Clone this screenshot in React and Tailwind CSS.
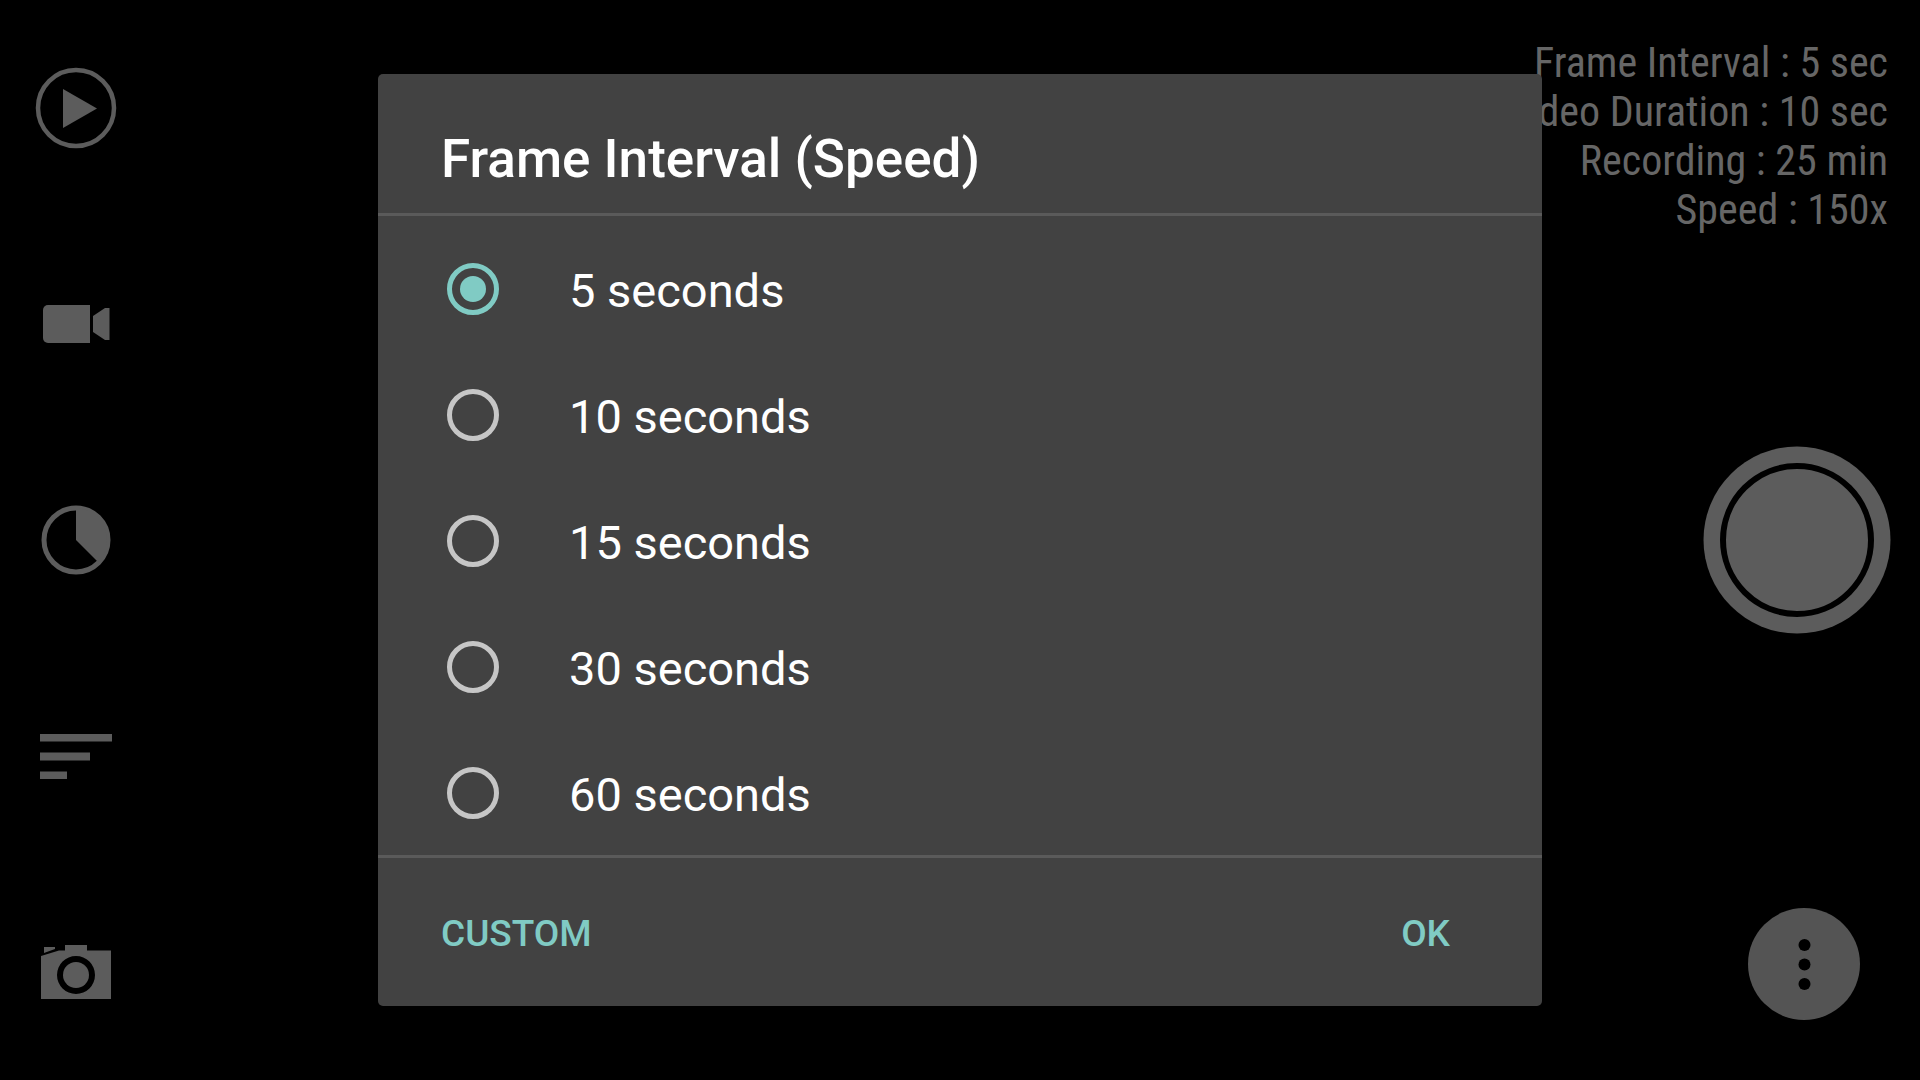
import { useState } from "react";

const intervals = [5, 10, 15, 30, 60];

const stats = [
  "Frame Interval : 5 sec",
  "Video Duration : 10 sec",
  "Recording : 25 min",
  "Speed : 150x",
];

const tools = [
  {
    label: "Play",
    icon: (
      <>
        <circle cx="40" cy="40" r="38" fill="none" stroke="currentColor" strokeWidth="4.5" />
        <path d="M27 21v39l34-19.500z" />
      </>
    ),
  },
  {
    label: "Video",
    icon: (
      <>
        <path d="M12 21h42v38H12a5 5 0 0 1-5-5V26a5 5 0 0 1 5-5z" />
        <path d="M57 32l12-8h4.500v32H69l-12-8z" />
      </>
    ),
  },
  {
    label: "Interval",
    icon: (
      <>
        <circle cx="40" cy="40" r="32" fill="none" stroke="currentColor" strokeWidth="5" />
        <path d="M40 8a32 32 0 0 1 22 54L40 40z" />
      </>
    ),
  },
  {
    label: "Settings",
    icon: <path d="M4 18h72v7.500H4zM4 36.500h50v8H4zM4 55.500h27v7.500H4z" />,
  },
  {
    label: "Camera",
    icon: (
      <>
        <path d="M8 15h11v2l-11 4z" />
        <path
          fillRule="evenodd"
          d="M5 24l18-5.500h6V13h22v5.500h24V67H5zM40 24a19 19 0 1 0 0 38 19 19 0 0 0 0-38z"
        />
        <circle cx="40" cy="43" r="13" />
      </>
    ),
  },
];

export default function App() {
  const [selected, setSelected] = useState(5);

  return (
    <main className="relative flex min-h-screen justify-between overflow-hidden bg-black font-[Roboto,sans-serif]">
      <nav className="grid w-38 grid-rows-5 place-items-center text-[#5c5c5c]">
        {tools.map((tool) => (
          <button key={tool.label} aria-label={tool.label}>
            <svg viewBox="0 0 80 80" className="size-20 overflow-visible fill-current">
              {tool.icon}
            </svg>
          </button>
        ))}
      </nav>

      <aside className="grid grid-rows-[1fr_auto_1fr] justify-items-end">
        <div className="pt-[38px] pr-8 text-right font-['Roboto_Condensed',Roboto,sans-serif] text-[42px] leading-[49px] text-[#666666]">
          {stats.map((line) => (
            <p key={line}>{line}</p>
          ))}
        </div>

        <button aria-label="Record" className="pr-[29px]">
          <svg viewBox="0 0 188 188" className="size-[188px] fill-[#5c5c5c]">
            <circle cx="94" cy="94" r="93.500" />
            <circle cx="94" cy="94" r="74" fill="none" stroke="#000" strokeWidth="6" />
          </svg>
        </button>

        <button aria-label="More options" className="self-end pr-15 pb-15">
          <svg viewBox="0 0 112 112" className="size-28 fill-black">
            <circle cx="56" cy="56" r="56" className="fill-[#545454]" />
            <circle cx="56.5" cy="37" r="6" />
            <circle cx="56.5" cy="56.5" r="6" />
            <circle cx="56.5" cy="76" r="6" />
          </svg>
        </button>
      </aside>

      <div className="absolute inset-0 flex items-center justify-center">
        <section
          role="dialog"
          aria-labelledby="dialog-title"
          className="w-full max-w-[1164px] rounded-[5px] bg-[#424242]"
        >
          <h1
            id="dialog-title"
            className="border-b-3 border-[#5a5a5a] px-[63px] pt-[53px] pb-[22px] text-[53px] leading-[64px] font-medium text-white"
          >
            Frame Interval (Speed)
          </h1>

          <div className="h-[639px] overflow-hidden pt-2.5">
            {intervals.map((value) => (
              <label
                key={value}
                className="flex h-[126px] items-center gap-[70px] px-[69px] text-[47px] text-white"
              >
                <input
                  type="radio"
                  name="interval"
                  value={value}
                  checked={selected === value}
                  onChange={() => setSelected(value)}
                  className="flex size-[52px] shrink-0 appearance-none items-center justify-center rounded-full border-5 border-[#c6c6c6] before:size-[26px] before:rounded-full checked:border-[#80cbc4] checked:before:bg-[#80cbc4]"
                />
                <span className="pt-1">{value} seconds</span>
              </label>
            ))}
          </div>

          <div className="flex h-[151px] items-center justify-between border-t-3 border-[#5a5a5a] pt-1 pr-[92px] pl-[63px] text-[37px] font-medium text-[#80cbc4]">
            <button>CUSTOM</button>
            <button>OK</button>
          </div>
        </section>
      </div>
    </main>
  );
}
